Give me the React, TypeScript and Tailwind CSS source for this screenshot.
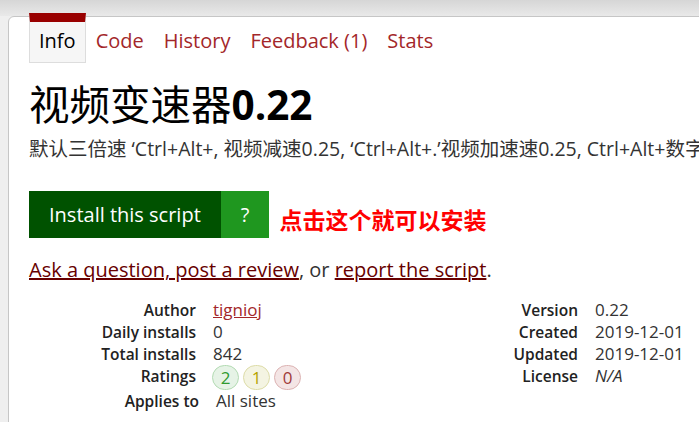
import React from 'react';

const tabs = ['Code', 'History', 'Feedback (1)', 'Stats'];

const Badge = ({ n, tone }: { n: number; tone: 'good' | 'ok' | 'bad' }) => {
  const styles = {
    good: 'bg-[#e6f3e6] border-[#b3dbb3] text-[#2f9a2f]',
    ok: 'bg-[#f4f4e2] border-[#dddca8] text-[#b5a300]',
    bad: 'bg-[#f4e5e5] border-[#dcb3b3] text-[#a03a3a]',
  }[tone];
  return (
    <span className={`inline-block w-[27px] h-[25px] rounded-full border text-center text-[17px] leading-[23px] ${styles}`}>
      {n}
    </span>
  );
};

const App = () => {
  return (
    <div className="min-h-screen w-full overflow-hidden bg-[linear-gradient(to_bottom,#d6d6d6,#e9e9e9_16px,#efefef_16px)] pt-[16px] pl-[8px] font-['Open_Sans','Noto_Sans_CJK_SC',sans-serif] text-[#333]">
      {/* main card, runs off the right edge like the screenshot */}
      <section className="w-[820px] min-h-[420px] bg-white border border-[#c6c6c6] rounded-tl-[6px] px-[20px] pb-6">
        <ul className="-mt-[4px] flex text-[20px] leading-[27px]">
          <li className="border-t-[9px] border-t-[#990000] border-x border-b border-x-[#dddddd] border-b-[#dddddd] bg-[#f6f6f6] px-[9px] pt-[5px] pb-[8px] text-black">
            Info
          </li>
          {tabs.map((t) => (
            <li key={t} className="px-[10px] pt-[14px] pb-[9px] text-[#a3272a]">
              {t}
            </li>
          ))}
        </ul>

        <h2 className="mt-[18px] text-[40.5px] leading-[47px] font-bold text-black whitespace-nowrap">
          <span className="font-normal">视频变速器</span>0.22
        </h2>
        <p className="mt-[7px] text-[19.5px] leading-[27px] whitespace-nowrap">
          默认三倍速 ‘Ctrl+Alt+, 视频减速0.25, ‘Ctrl+Alt+.’视频加速速0.25, Ctrl+Alt+数字键 设置速度
        </p>

        <div className="mt-[29px] flex items-center">
          <a href="#" className="bg-[#005200] px-[20px] py-[10px] text-[20px] leading-[27px] text-white">
            Install this script
          </a>
          <a href="#" className="bg-[#1f971f] px-[20px] py-[10px] text-[20px] leading-[27px] text-white">
            ?
          </a>
          <span className="ml-[10px] mt-[12px] text-[23px] font-bold text-[#ff0000]">点击这个就可以安装</span>
        </div>

        <p className="mt-[18px] text-[20px] leading-[27px]">
          <a href="#" className="text-[#670000] underline">Ask a question, post a review</a>, or{' '}
          <a href="#" className="text-[#670000] underline">report the script</a>.
        </p>

        <div className="mt-[16px] flex text-[17px] leading-[22px]">
          <dl className="w-[382px] grid grid-cols-[167px_auto] gap-x-[17px] content-start">
            <dt className="text-right text-[15.5px] font-semibold text-[#222]">Author</dt>
            <dd><a href="#" className="text-[#a3272a] underline">tignioj</a></dd>
            <dt className="text-right text-[15.5px] font-semibold text-[#222]">Daily installs</dt>
            <dd>0</dd>
            <dt className="text-right text-[15.5px] font-semibold text-[#222]">Total installs</dt>
            <dd>842</dd>
            <dt className="text-right text-[15.5px] font-semibold text-[#222]">Ratings</dt>
            <dd className="flex gap-[4px] -ml-[1px]">
              <Badge n={2} tone="good" />
              <Badge n={1} tone="ok" />
              <Badge n={0} tone="bad" />
            </dd>
            <dt className="text-right text-[15.5px] font-semibold text-[#222] -mr-[3px]">Applies to</dt>
            <dd className="pl-[3px]">All sites</dd>
          </dl>
          <dl className="grid grid-cols-[167px_auto] gap-x-[17px] content-start">
            <dt className="text-right text-[15.5px] font-semibold text-[#222]">Version</dt>
            <dd>0.22</dd>
            <dt className="text-right text-[15.5px] font-semibold text-[#222]">Created</dt>
            <dd>2019-12-01</dd>
            <dt className="text-right text-[15.5px] font-semibold text-[#222]">Updated</dt>
            <dd>2019-12-01</dd>
            <dt className="text-right text-[15.5px] font-semibold text-[#222]">License</dt>
            <dd className="italic">N/A</dd>
          </dl>
        </div>
      </section>
    </div>
  );
};

export default App;
